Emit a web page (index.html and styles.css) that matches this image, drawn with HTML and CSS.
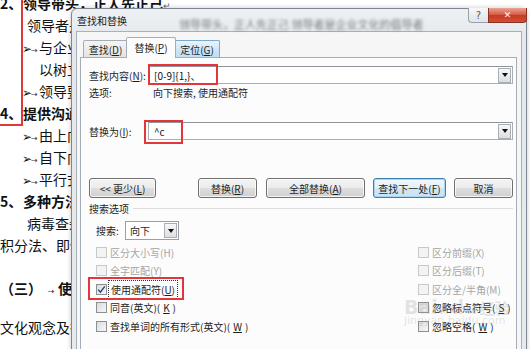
FILE: index.html
```html
<!DOCTYPE html>
<html lang="zh-CN">
<head>
<meta charset="utf-8">
<title>查找和替换</title>
<link rel="stylesheet" href="styles.css">
</head>
<body>
<div class="screen">
  <div class="doc">
    <p class="ln h l1"><span class="num">2、</span>领导带头，正人先正己<span class="pm">↵</span></p>
    <p class="ln ind">领导者是企业文化的倡导者和推动者</p>
    <p class="ln bl"><span class="bul">➢</span><span class="tab">→</span>与企业文化保持一致</p>
    <p class="ln ind2">以树立良好的榜样</p>
    <p class="ln bl"><span class="bul">➢</span><span class="tab">→</span>领导要身体力行</p>
    <p class="ln h"><span class="num">4、</span>提供沟通渠道</p>
    <p class="ln bl"><span class="bul">➢</span><span class="tab">→</span>由上向下沟通</p>
    <p class="ln bl"><span class="bul">➢</span><span class="tab">→</span>自下向上沟通</p>
    <p class="ln bl"><span class="bul">➢</span><span class="tab">→</span>平行式沟通</p>
    <p class="ln h"><span class="num">5、</span>多种方法并用</p>
    <p class="ln ind">病毒查杀法</p>
    <p class="ln">积分法、即使用积分</p>
    <p class="ln h sec">（三）<span class="tab">→</span>使命与愿景</p>
    <p class="ln last">文化观念及行为规范</p>
  </div>
  <div class="mark mark-doc"></div>

  <div class="dialog">
    <div class="titlebar">
      <span class="title">查找和替换</span>
      <span class="glass">领导带头，正人先正己 领导者是企业文化的倡导者</span>
      <div class="caps"><span class="cap help">?</span><span class="cap close">✕</span></div>
    </div>
    <div class="client">
      <div class="tabs">
        <span class="tabb">查找(<u>D</u>)</span>
        <span class="tabb on">替换(<u>P</u>)</span>
        <span class="tabb hot">定位(<u>G</u>)</span>
      </div>
      <div class="panel">
        <div class="row find">
          <span class="lbl">查找内容(<u>N</u>):</span>
          <div class="combo"><span class="val">[0-9]{1,}、</span><span class="drop"><i></i></span></div>
        </div>
        <div class="optline"><span class="lbl">选项:</span><span class="oval">向下搜索, 使用通配符</span></div>
        <div class="row repl">
          <span class="lbl">替换为(<u>I</u>):</span>
          <div class="combo"><span class="val">^c</span><span class="drop"><i></i></span></div>
        </div>
        <div class="btns">
          <span class="btn b-less">&lt;&lt; 更少(<u>L</u>)</span>
          <span class="btn b-rep">替换(<u>R</u>)</span>
          <span class="btn b-all">全部替换(<u>A</u>)</span>
          <span class="btn b-next">查找下一处(<u>F</u>)</span>
          <span class="btn b-cancel">取消</span>
        </div>
        <div class="group"><span>搜索选项</span><span class="rule"></span></div>
        <div class="search-row">
          <span class="slbl">搜索:</span>
          <div class="select"><span class="v">向下</span><span class="drop"><i></i></span></div>
        </div>
        <div class="checks">
          <span class="ck dis"><span class="box"></span>区分大小写(H)</span>
          <span class="ck dis"><span class="box"></span>区分前缀(X)</span>
          <span class="ck dis"><span class="box"></span>全字匹配(Y)</span>
          <span class="ck dis"><span class="box"></span>区分后缀(T)</span>
          <span class="ck"><span class="box"><svg viewBox="0 0 9 9" width="9" height="9"><path d="M1.2 4.6 L3.4 7.2 L7.8 1.4" fill="none" stroke="#1d3f73" stroke-width="1.3"/></svg></span><span class="focus">使用通配符(<u>U</u>)</span></span>
          <span class="ck dis"><span class="box"></span>区分全/半角(M)</span>
          <span class="ck"><span class="box"></span>同音(英文)(<u>K</u>)</span>
          <span class="ck"><span class="box"></span>忽略标点符号(<u>S</u>)</span>
          <span class="ck"><span class="box"></span>查找单词的所有形式(英文)(<u>W</u>)</span>
          <span class="ck"><span class="box"></span>忽略空格(<u>W</u>)</span>
        </div>
      </div>
    </div>
  </div>

  <div class="mark mark-find"></div>
  <div class="mark mark-repl"></div>
  <div class="mark mark-wild"></div>

  <div class="wm"><span class="wm1">Bai<span class="paw">❀</span>du</span><span class="wm2">经验</span><span class="wm3">jingyan.baidu.com</span></div>
</div>
</body>
</html>
```

FILE: styles.css
```css
* { box-sizing: border-box; }
html, body { margin: 0; padding: 0; background: #fff; }
body { width: 530px; height: 349px; overflow: hidden; }

.screen {
  position: relative;
  width: 530px;
  height: 349px;
  overflow: hidden;
  background: #fff;
  font-family: "Noto Sans CJK SC", "Noto Sans", sans-serif;
  color: #111;
}

/* ---------- document behind ---------- */
.doc { color: #111; }
.ln {
  margin: 0;
  height: 22px;
  line-height: 22px;
  font-size: 14px;
  white-space: nowrap;
}
.l1 { margin-top: -8px; }
.h { font-weight: 700; }
.num { display: inline-block; width: 23px; font-weight: 700; }
.pm { font-size: 9px; color: #666; font-weight: 400; }
.ind { padding-left: 27px; }
.ind2 { padding-left: 39px; }
.bl { padding-left: 22px; }
.bul {
  display: inline-block;
  width: 9px;
  font-family: "DejaVu Sans", sans-serif;
  font-size: 12px;
}
.tab {
  display: inline-block;
  width: 8px;
  font-size: 8px;
  color: #333;
  font-weight: 400;
  font-family: "DejaVu Sans", sans-serif;
}
.sec { margin-top: 21px; }
.sec .tab { width: 14px; text-align: center; margin-left: 2px; }
.last { margin-top: 17px; }

/* ---------- red annotation boxes ---------- */
.mark { position: absolute; border: 2px solid #e1363b; }
.mark-doc { left: -10px; top: -10px; width: 33px; height: 136px; }
.mark-find { left: 148px; top: 64px; width: 70px; height: 21px; }
.mark-repl { left: 144px; top: 120px; width: 39px; height: 24px; }
.mark-wild { left: 88px; top: 277px; width: 96px; height: 23px; }

/* ---------- dialog ---------- */
.dialog {
  position: absolute;
  left: 71px;
  top: 8px;
  width: 456px;
  height: 360px;
  border: 1px solid #7d8791;
  border-radius: 6px 6px 0 0;
  background: linear-gradient(#eef1f4, #e4e8ec 30px, #e7eaed);
  padding: 0 4px;
  box-shadow: 0 0 5px rgba(0, 0, 0, .22);
  color: #1e1e1e;
  font-size: 10px;
}
.titlebar {
  display: flex;
  align-items: center;
  height: 22px;
}
.title { font-size: 10px; padding-left: 1px; color: #1a1a1a; }
.glass {
  margin-left: 52px;
  margin-top: 8px;
  width: 282px;
  overflow: hidden;
  white-space: nowrap;
  font-size: 11px;
  color: #555;
  filter: blur(1.4px);
  opacity: .75;
}
.caps {
  margin-left: auto;
  margin-right: -5px;
  margin-top: -1px;
  align-self: flex-start;
  display: flex;
}
.cap {
  height: 15px;
  display: flex;
  align-items: center;
  justify-content: center;
}
.help {
  width: 20px;
  border: 1px solid #98a1aa;
  border-top: none;
  border-right: none;
  border-radius: 0 0 0 4px;
  background: linear-gradient(#f6f7f8, #e0e4e8);
  color: #5a5a5a;
  font-size: 10px;
  font-family: "DejaVu Sans", sans-serif;
}
.close {
  width: 39px;
  border: 1px solid #8b3226;
  border-top: none;
  border-radius: 0 0 4px 0;
  background: linear-gradient(#eaa595, #d65a43 48%, #c63b22 52%, #d24e35);
  color: #fff;
  font-size: 9px;
  font-weight: 700;
  font-family: "DejaVu Sans", sans-serif;
}

.client {
  height: 335px;
  border: 1px solid #a8b1ba;
  background: #f6f6f6;
  padding: 5px 4px 0 3px;
}
.tabs {
  position: relative;
  z-index: 1;
  display: flex;
  align-items: flex-end;
  height: 20px;
  padding-left: 3px;
}
.tabb {
  height: 17px;
  width: 45px;
  border: 1px solid #a4acb5;
  border-bottom: none;
  border-radius: 2px 2px 0 0;
  background: linear-gradient(#f4f4f4, #e4e4e4);
  display: flex;
  align-items: center;
  justify-content: center;
}
.tabb.on {
  position: relative;
  z-index: 2;
  height: 21px;
  width: 50px;
  margin: 0 -2px -1px -2px;
  background: #fcfcfc;
  padding-bottom: 2px;
}
.tabb.hot {
  width: 46px;
  border-color: #7fa9c8;
  background: linear-gradient(#eaf5fc, #cbe6f7 55%, #bfe0f5);
}

.panel {
  height: 310px;
  border: 1px solid #a4acb5;
  background: #fcfcfc;
  padding: 0 3px 0 8px;
}
.row { display: flex; align-items: center; height: 18px; }
.find { margin-top: 8px; }
.repl { margin-top: 22px; }
.lbl { width: 59px; flex: none; }
.combo {
  flex: 1;
  height: 18px;
  border: 1px solid #abadb3;
  border-top-color: #8f949a;
  background: #fff;
  display: flex;
  align-items: center;
}
.val { flex: 1; padding-left: 5px; font-size: 10px; color: #111; }
.drop {
  flex: none;
  width: 13px;
  height: 15px;
  margin-right: 1px;
  border: 1px solid #a7afb8;
  background: linear-gradient(#f7f7f7, #dedede);
  display: flex;
  align-items: center;
  justify-content: center;
}
.drop i {
  display: block;
  width: 0;
  height: 0;
  border-left: 3px solid transparent;
  border-right: 3px solid transparent;
  border-top: 4px solid #111;
}
.optline { display: flex; margin-top: 2px; height: 14px; line-height: 14px; }
.oval { padding-left: 5px; }

.btns { display: flex; margin-top: 38px; height: 20px; }
.btn {
  height: 20px;
  border: 1px solid #707070;
  border-radius: 3px;
  background: linear-gradient(#f3f3f3, #ececec 48%, #dedede 52%, #d0d0d0);
  box-shadow: inset 0 0 0 1px rgba(255, 255, 255, .75);
  display: flex;
  align-items: center;
  justify-content: center;
  white-space: nowrap;
}
.b-less { width: 67px; }
.b-rep { width: 59px; margin-left: 42px; }
.b-all { width: 99px; margin-left: 9px; }
.b-next {
  width: 73px;
  margin-left: 8px;
  border-color: #3c7fb1;
  background: linear-gradient(#f2f8fc, #e3f0f8 48%, #d3e7f4 52%, #c8e1f2);
  box-shadow: inset 0 0 0 1px #a8d6f2;
}
.b-cancel { width: 59px; margin-left: 8px; }

.group { display: flex; align-items: center; margin-top: 3px; height: 14px; }
.rule { flex: 1; border-top: 1px solid #dedede; margin-left: 4px; }

.search-row { display: flex; align-items: center; margin-top: 6px; height: 19px; padding-left: 7px; }
.slbl { width: 29px; flex: none; }
.select {
  width: 54px;
  height: 19px;
  border: 1px solid #9e9e9e;
  background: #fff;
  display: flex;
  align-items: center;
}
.select .v { flex: 1; padding-left: 4px; }

.checks {
  display: grid;
  grid-template-columns: 322px auto;
  grid-auto-rows: 18.5px;
  margin-top: 3px;
  padding-left: 7px;
}
.ck { display: flex; align-items: center; gap: 3px; white-space: nowrap; }
.box {
  flex: none;
  width: 11px;
  height: 11px;
  border: 1px solid #8e8f8f;
  background: linear-gradient(135deg, #d9dcdf, #f7f7f7);
  display: flex;
  align-items: center;
  justify-content: center;
}
.dis { color: #a5a5a5; }
.dis .box { border-color: #c8c8c8; background: #f3f3f3; }
.focus { outline: 1px dotted #333; outline-offset: 1px; padding: 0 1px; }

/* ---------- watermark ---------- */
.wm {
  position: absolute;
  left: 404px;
  top: 296px;
  width: 110px;
  color: rgba(160, 160, 160, .28);
  font-family: "DejaVu Sans", sans-serif;
}
.wm1 { font-size: 19px; font-weight: 700; letter-spacing: 0; }
.paw { font-size: 15px; }
.wm2 { font-family: "Noto Sans CJK SC", sans-serif; font-size: 15px; font-weight: 700; margin-left: 2px; }
.wm3 { display: block; font-size: 11px; margin-top: -4px; }
```
